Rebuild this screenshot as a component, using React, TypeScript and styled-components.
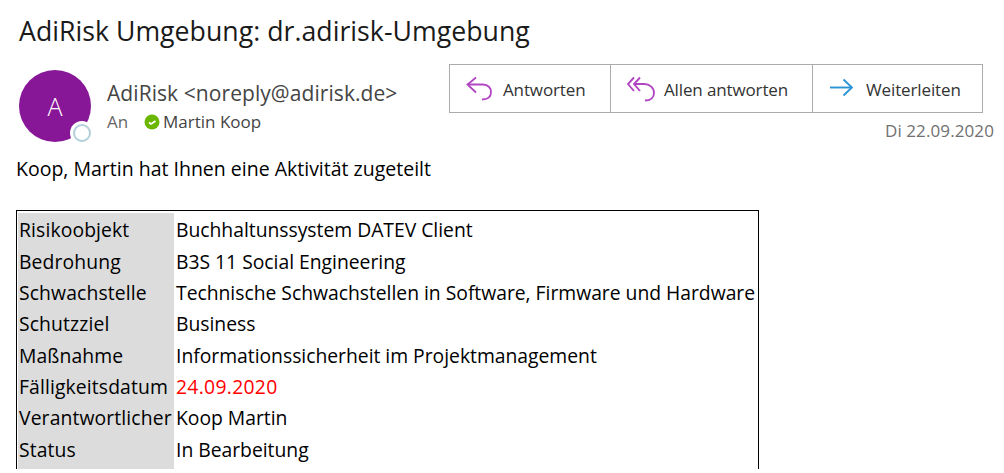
import styled, { createGlobalStyle } from 'styled-components';

const GlobalStyle = createGlobalStyle`
  html, body {
    margin: 0;
    padding: 0;
    background: #fff;
    overflow: hidden;
  }
  body {
    font-family: 'Open Sans', 'Noto Sans', sans-serif;
    color: #000;
  }
`;

const Page = styled.div`
  width: 1004px;
  height: 469px;
  overflow: hidden;
  box-sizing: border-box;
  padding: 13px 10px 0 16px;
`;

const Subject = styled.h1`
  margin: 0 0 0 3px;
  font-size: 26.67px;
  line-height: 36px;
  font-weight: 400;
  letter-spacing: 0.03px;
  color: #1a1a1a;
  white-space: nowrap;
`;

const HeaderRow = styled.div`
  display: flex;
  justify-content: space-between;
  margin-top: 15px;
  height: 90px;
`;

const Sender = styled.div`
  display: flex;
  margin: 6px 0 0 3px;
`;

const AvatarWrap = styled.div`
  position: relative;
  width: 72px;
  height: 72px;
`;

const Avatar = styled.div`
  width: 72px;
  height: 72px;
  border-radius: 50%;
  background: #881798;
  color: #fff;
  font-size: 25px;
  font-weight: 300;
  line-height: 72px;
  text-align: center;
`;

const Presence = styled.div`
  position: absolute;
  right: 0;
  bottom: 0;
  width: 18px;
  height: 18px;
  box-sizing: border-box;
  border: 2.5px solid #b3cfdb;
  border-radius: 50%;
  background: #fff;
  box-shadow: 0 0 0 3px #fff;
`;

const SenderText = styled.div`
  margin-left: 16px;
  padding-top: 8px;
`;

const FromLine = styled.div`
  font-size: 21px;
  line-height: 30px;
  letter-spacing: 0.07px;
  color: #444;
  white-space: nowrap;
`;

const ToLine = styled.div`
  display: flex;
  align-items: center;
  margin-top: 2px;
  font-size: 17px;
  line-height: 24px;
  color: #444;
`;

const ToLabel = styled.span`
  width: 37px;
  color: #666;
`;

const Recipient = styled.span`
  margin-left: 3px;
`;

const Actions = styled.div`
  display: flex;
  flex-direction: column;
  align-items: flex-end;
`;

const ButtonBar = styled.div`
  display: flex;
  height: 49px;
  margin-right: 11px;
  box-sizing: border-box;
  border: 1px solid #ababab;
`;

const ActionButton = styled.button<{ $width: number; $gap: number }>`
  display: flex;
  align-items: center;
  gap: ${(props) => props.$gap}px;
  width: ${(props) => props.$width}px;
  height: 100%;
  padding: 0 0 0 16px;
  border: 0;
  border-right: 1px solid #ababab;
  background: #fff;
  font-family: inherit;
  font-size: 17px;
  letter-spacing: -0.13px;
  color: #333;
  cursor: pointer;
  &:last-child {
    border-right: 0;
  }
`;

const ButtonLabel = styled.span`
  padding-top: 1px;
  white-space: nowrap;
`;

const DateText = styled.div`
  margin-top: 6px;
  font-size: 17px;
  line-height: 24px;
  letter-spacing: 0.1px;
  color: #707070;
`;

const Intro = styled.p`
  margin: 2px 0 0;
  font-size: 19.5px;
  line-height: 26px;
  white-space: nowrap;
`;

const InfoTable = styled.table`
  margin-top: 28px;
  width: 743px;
  box-sizing: border-box;
  border: 1px solid #000;
  border-collapse: separate;
  border-spacing: 0;
  padding: 2px 0 0 1px;
  table-layout: fixed;
`;

const LabelCell = styled.th`
  width: 156px;
  height: 31.38px;
  padding: 2px 0 0 1px;
  box-sizing: border-box;
  background: #dcdcdc;
  font-size: 19.33px;
  font-weight: 400;
  letter-spacing: 0.12px;
  text-align: left;
  white-space: nowrap;
`;

const ValueCell = styled.td<{ $alert?: boolean }>`
  padding: 2px 0 0 2px;
  font-size: 19.33px;
  letter-spacing: ${(props) => (props.$alert ? '0.3px' : '-0.02px')};
  white-space: nowrap;
  color: ${(props) => (props.$alert ? '#ff0000' : '#000')};
`;

const ReplyIcon = () => (
  <svg width="26" height="26" viewBox="0 0 26 26" fill="none" stroke="#b146c2" strokeWidth="1.8">
    <path d="M10 1.5 L1.5 8.5 L10 16.5" />
    <path d="M1.5 8.5 H17 C22 8.5 25 12 25 16 C25 20.5 22 23.5 16 23.5" />
  </svg>
);

const ReplyAllIcon = () => (
  <svg width="28" height="26" viewBox="0 0 28 26" fill="none" stroke="#b146c2" strokeWidth="1.9">
    <path d="M7 1.5 L1 8 L7 15" />
    <path d="M13 1.5 L7 8 L13 15" />
    <path d="M7 8 H17 C23 8 27 12 27 17 C27 21 24 24.5 18 24.5" />
  </svg>
);

const ForwardIcon = () => (
  <svg width="24" height="26" viewBox="0 0 24 26" fill="none" stroke="#2b94d4" strokeWidth="1.9">
    <path d="M1 11.5 H23" />
    <path d="M14.5 3.5 L23 11.5 L14.5 19.5" />
  </svg>
);

const CheckBadge = () => (
  <svg width="16" height="16" viewBox="0 0 16 16">
    <circle cx="8" cy="8" r="7.5" fill="#6bb700" />
    <path d="M5 8.5 L7 10 L11.5 7" fill="none" stroke="#fff" strokeWidth="1.8" />
  </svg>
);

const rows = [
  { label: 'Risikoobjekt', value: 'Buchhaltunssystem DATEV Client' },
  { label: 'Bedrohung', value: 'B3S 11 Social Engineering' },
  { label: 'Schwachstelle', value: 'Technische Schwachstellen in Software, Firmware und Hardware' },
  { label: 'Schutzziel', value: 'Business' },
  { label: 'Maßnahme', value: 'Informationssicherheit im Projektmanagement' },
  { label: 'Fälligkeitsdatum', value: '24.09.2020', alert: true },
  { label: 'Verantwortlicher', value: 'Koop Martin' },
  { label: 'Status', value: 'In Bearbeitung' },
  { label: '', value: '' },
];

export default function App() {
  return (
    <Page>
      <GlobalStyle />
      <Subject>AdiRisk Umgebung: dr.adirisk-Umgebung</Subject>
      <HeaderRow>
        <Sender>
          <AvatarWrap>
            <Avatar>A</Avatar>
            <Presence />
          </AvatarWrap>
          <SenderText>
            <FromLine>AdiRisk &lt;noreply@adirisk.de&gt;</FromLine>
            <ToLine>
              <ToLabel>An</ToLabel>
              <CheckBadge />
              <Recipient>Martin Koop</Recipient>
            </ToLine>
          </SenderText>
        </Sender>
        <Actions>
          <ButtonBar>
            <ActionButton $width={161} $gap={11}><ReplyIcon /><ButtonLabel>Antworten</ButtonLabel></ActionButton>
            <ActionButton $width={202} $gap={9}><ReplyAllIcon /><ButtonLabel>Allen antworten</ButtonLabel></ActionButton>
            <ActionButton $width={169} $gap={13}><ForwardIcon /><ButtonLabel>Weiterleiten</ButtonLabel></ActionButton>
          </ButtonBar>
          <DateText>Di 22.09.2020</DateText>
        </Actions>
      </HeaderRow>
      <Intro>Koop, Martin hat Ihnen eine Aktivität zugeteilt</Intro>
      <InfoTable>
        <tbody>
          {rows.map((row) => (
            <tr key={row.label}>
              <LabelCell>{row.label}</LabelCell>
              <ValueCell $alert={row.alert}>{row.value}</ValueCell>
            </tr>
          ))}
        </tbody>
      </InfoTable>
    </Page>
  );
}
